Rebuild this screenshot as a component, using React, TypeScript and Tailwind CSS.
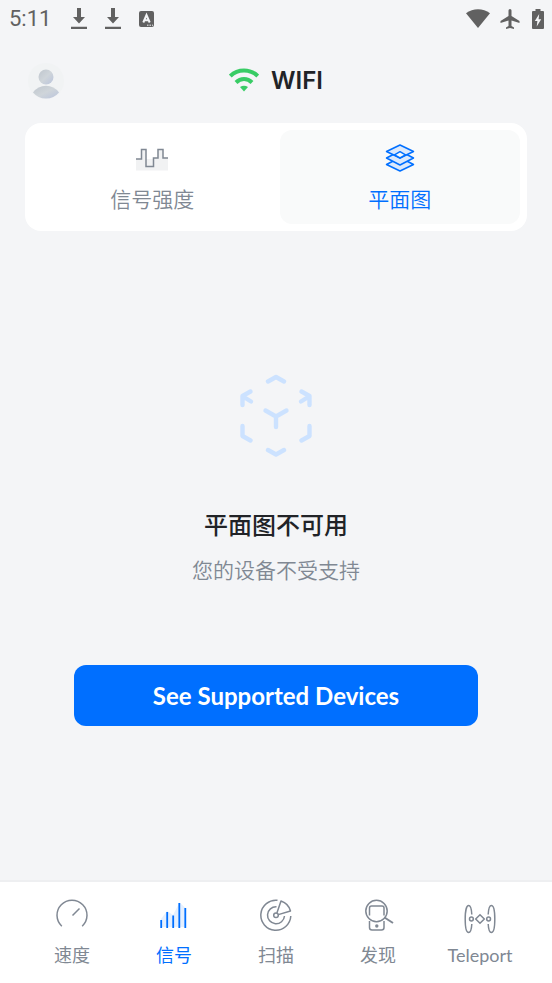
/*
 * ----------------------------------------------
 * WiFi 平面图页面
 * App.tsx
 * ----------------------------------------------
 */

import { useState, type ReactNode } from 'react'
import clsx from 'clsx'

function DownloadIcon() {
  return (
    <svg width="16" height="22" viewBox="0 0 16 22" fill="#616161" aria-hidden="true">
      <path d="M6 0h4v9h4l-6 6.5L2 9h4zM0 18.8h16v2.2H0z" />
    </svg>
  )
}

function StatusBar() {
  return (
    <div className="flex h-[38px] items-center justify-between pr-2 pl-[9px]">
      <div className="flex items-center">
        <span className="w-[62px] font-['Roboto',sans-serif] text-[22px] leading-6 text-[#616161]">5:11</span>
        <div className="flex items-center gap-[18px]">
          <DownloadIcon />
          <DownloadIcon />
          <svg width="16" height="16" viewBox="0 0 16 16" aria-hidden="true">
            <rect width="15" height="16" rx="2" fill="#616161" />
            <path d="M4.3 11.5L7.5 4l3.2 7.5M5.6 9.2h3.8" fill="none" stroke="#f4f5f7" strokeWidth="2" />
            <path d="M8 14.2h1.5M10.5 14.2H12M13 14.2h1" stroke="#f4f5f7" strokeWidth="1" />
          </svg>
        </div>
      </div>
      <div className="flex items-center gap-2.5">
        <svg width="24" height="20" viewBox="0 0 24 20" fill="#616161" aria-hidden="true">
          <path d="M0 4.2C7-1.1 17-1.1 24 4.2L12 19z" />
        </svg>
        <svg width="20" height="22" viewBox="2 1 20 22" fill="#616161" aria-hidden="true">
          <path d="M21.5 16v-2l-8-5V3.500a1.500 1.500 0 0 0-3 0V9l-8 5v2l8-2.500V19L8 20.500V22l4-1 4 1v-1.500L13.500 19v-5.500z" />
        </svg>
        <svg className="ml-0.5" width="12" height="20" viewBox="0 0 12 20" aria-hidden="true">
          <path d="M3.500 0h5v2H11q1 0 1 1v16q0 1-1 1H1q-1 0-1-1V3q0-1 1-1h2.500z" fill="#616161" />
          <path d="M7.200 5L2.800 12H5.400L4.700 17.500 9.200 10.200H6.600z" fill="#f4f5f7" />
        </svg>
      </div>
    </div>
  )
}

function Header() {
  return (
    <header className="grid h-[85px] grid-cols-[1fr_auto_1fr] items-center px-7">
      <button type="button" aria-label="账户" className="size-9 rounded-full bg-[#f1f3f4]">
        <svg width="36" height="36" viewBox="0 0 36 36" aria-hidden="true">
          <defs>
            <linearGradient id="avatar" x1="0" y1="0" x2="1" y2="1">
              <stop offset="0" stopColor="#bfc6ce" />
              <stop offset="0.5" stopColor="#cfd5da" />
              <stop offset="1" stopColor="#bac4dc" />
            </linearGradient>
          </defs>
          <circle cx="18" cy="14" r="7.5" fill="url(#avatar)" />
          <path d="M5 29.5Q10 22.8 18 22.8T31 29.5Q26 35.5 18 35.5T5 29.5z" fill="url(#avatar)" />
        </svg>
      </button>
      <div className="flex items-center gap-3">
        <svg width="30" height="28" viewBox="0 0 30 28" aria-hidden="true">
          <g fill="none" stroke="#38cc65" strokeWidth="4">
            <path d="M1.3 9Q7 3.5 15 3.5t13.7 5.5" />
            <path d="M7 15.5q3.500-3.500 8-3.500t8 3.500" />
          </g>
          <path d="M11 20q4-2.700 8 0L15 24.500z" fill="#38cc65" />
        </svg>
        <h1 className="font-['Inter',sans-serif] text-[24px] leading-8 font-semibold text-[#212327]">WIFI</h1>
      </div>
    </header>
  )
}

function SignalWaveIcon() {
  return (
    <svg width="32" height="28" viewBox="0 0 32 28" fill="none" aria-hidden="true">
      <path d="M0 15h5.500V5.500H10V15h7.500v-1h4V5.500h5.500V14h5v12.500H0z" fill="#f1f2f3" />
      <path d="M0 15h5.500V5.500H10v17h7.500V14H22V5.500h5V14h5" stroke="#808893" strokeWidth="1.5" />
    </svg>
  )
}

function LayersIcon() {
  return (
    <svg width="30" height="28" viewBox="0 0 30 28" aria-hidden="true">
      <g fill="#dce9fc" stroke="#006fff" strokeWidth="1.5" strokeLinejoin="round">
        <path d="M1.5 20.5L15 13.5l13.5 7L15 27z" />
        <path d="M1.5 14L15 7l13.5 7L15 21z" />
        <path d="M1.5 7.5L15 1l13.5 6.5L15 14z" />
        <path d="M9.5 10.8L15 7.7l5.500 3.100L15 14z" fill="#f9fafa" />
      </g>
    </svg>
  )
}

type Tab = { id: string; label: string; icon: ReactNode }

const tabs: Tab[] = [
  { id: 'strength', label: '信号强度', icon: <SignalWaveIcon /> },
  { id: 'floorplan', label: '平面图', icon: <LayersIcon /> },
]

function ScanBoxIcon() {
  return (
    <svg
      width="74"
      height="84"
      viewBox="0 0 74 84"
      fill="none"
      stroke="#cce2ff"
      strokeWidth="4.4"
      strokeLinecap="round"
      strokeLinejoin="round"
      aria-hidden="true"
    >
      <path d="M29 8.500L37 4l8 4.500M29 77l8 4.500L45 77" />
      <path d="M3.500 32V23L11.500 18.500M4 23.500l8 5" />
      <path d="M70.500 32V23L62.500 18.500M70 23.500L62 28.500" />
      <path d="M3.500 53v10l8 4.500M70.500 53v10l-8 4.500" />
      <path d="M26.500 37.500L37 43.500l10.500-6M37 43.500V54" />
    </svg>
  )
}

function SpeedIcon() {
  return (
    <svg width="32" height="32" viewBox="0 0 32 32" fill="none" stroke="#808893" strokeWidth="1.5" aria-hidden="true">
      <path d="M5.800 27.200A15 15 0 1 1 26.200 27.200M16.500 16.500l7-7" />
    </svg>
  )
}

function BarsIcon() {
  return (
    <svg width="32" height="32" viewBox="0 0 32 32" aria-hidden="true">
      <path d="M3 20L9 12l6 4 6.500-12.500L27.500 9v19H3z" fill="#e5f0ff" />
      <path d="M3.200 21v8M9.200 13v16M15.200 16.500V29M21.300 4v25M27.300 9v20" stroke="#006fff" strokeWidth="1.8" />
    </svg>
  )
}

function ScanIcon() {
  return (
    <svg width="32" height="32" viewBox="0 0 32 32" fill="none" stroke="#808893" strokeWidth="1.5" aria-hidden="true">
      <path d="M17.500 1.300A15 15 0 1 0 30.800 17" />
      <path d="M16.500 7.800A8.500 8.500 0 1 0 24.500 17" />
      <circle cx="16" cy="16.2" r="2.3" />
      <path d="M16.900 13.900L21 2q7.500 2.500 9.500 10L18.300 15.600" strokeLinejoin="round" />
    </svg>
  )
}

function DiscoverIcon() {
  return (
    <svg width="32" height="32" viewBox="0 0 32 32" fill="none" stroke="#808893" strokeWidth="1.5" aria-hidden="true">
      <circle cx="14.5" cy="12" r="10.7" />
      <path d="M7.500 16.500V9q0-2 2-2h10.500q2 0 2 2v7.500" />
      <path d="M22.500 18.500L31 24" strokeWidth="2" />
      <path d="M7.500 22v6.500q0 2.500 2.500 2.500h9.500q2.500 0 2.500-2.500V22" />
      <circle cx="14.8" cy="27" r="1.7" fill="#808893" stroke="none" />
    </svg>
  )
}

function TeleportIcon() {
  return (
    <svg
      className="overflow-visible"
      width="32"
      height="32"
      viewBox="0 0 32 32"
      fill="none"
      stroke="#808893"
      strokeWidth="1.5"
      aria-hidden="true"
    >
      <path d="M7.800 15.500C7.500 9.500 6.300 6.500 4.600 6.500 2.500 6.500 1.200 12 1.200 20S2.500 33.500 4.600 33.500C6.300 33.500 7.500 31 7.800 25" />
      <path d="M24.200 15.500C24.500 9.500 25.700 6.500 27.400 6.500 29.500 6.500 30.800 12 30.800 20S29.500 33.500 27.400 33.500C25.700 33.500 24.500 31 24.200 25" />
      <path d="M16 15.700l4.300 4.300-4.300 4.300-4.300-4.300z" />
      <circle cx="7.4" cy="20" r="1.9" />
      <circle cx="24.6" cy="20" r="1.9" />
    </svg>
  )
}

const navItems: Tab[] = [
  { id: 'speed', label: '速度', icon: <SpeedIcon /> },
  { id: 'signal', label: '信号', icon: <BarsIcon /> },
  { id: 'scan', label: '扫描', icon: <ScanIcon /> },
  { id: 'discover', label: '发现', icon: <DiscoverIcon /> },
  { id: 'teleport', label: 'Teleport', icon: <TeleportIcon /> },
]

export default function App() {
  const [tab, setTab] = useState('floorplan')

  return (
    <div className="flex min-h-screen flex-col bg-[#f4f5f7] font-['Lato','Noto_Sans_CJK_SC',sans-serif]">
      <StatusBar />
      <Header />

      <div className="mx-[25px] grid grid-cols-2 gap-[7px] rounded-2xl bg-white p-[7px]" role="tablist">
        {tabs.map((item) => (
          <button
            key={item.id}
            type="button"
            role="tab"
            aria-selected={tab === item.id}
            onClick={() => setTab(item.id)}
            className={clsx(
              "flex flex-col items-center gap-[14px] rounded-xl py-[14px] font-['Noto_Sans_CJK_SC',sans-serif] text-[21px] leading-6 font-[350]",
              tab === item.id ? 'bg-[#f9fafa] text-[#006fff]' : 'text-[#808893]',
            )}
          >
            {item.icon}
            {item.label}
          </button>
        ))}
      </div>

      <main className="flex flex-1 flex-col items-center justify-center px-[74px] pb-3">
        <ScanBoxIcon />
        <h2 className="mt-[50px] text-[24px] leading-9 font-medium text-[#212327]">平面图不可用</h2>
        <p className="mt-2.5 font-['Noto_Sans_CJK_SC',sans-serif] text-[21px] leading-8 font-[350] text-[#808893]">
          您的设备不受支持
        </p>
        <button
          type="button"
          className="mt-20 h-[61px] w-full rounded-xl bg-[#006fff] text-[24px] font-bold text-white"
        >
          See Supported Devices
        </button>
      </main>

      <nav className="grid grid-cols-5 border-t-2 border-[#eeeff1] bg-white px-[21px] pt-[17px] pb-4">
        {navItems.map((item) => (
          <a
            key={item.id}
            href={`#${item.id}`}
            aria-current={item.id === 'signal' ? 'page' : undefined}
            className={clsx(
              'flex flex-col items-center gap-3 text-[18px] leading-6',
              item.id === 'signal' ? 'text-[#006fff]' : 'text-[#808893]',
            )}
          >
            {item.icon}
            {item.label}
          </a>
        ))}
      </nav>
    </div>
  )
}
